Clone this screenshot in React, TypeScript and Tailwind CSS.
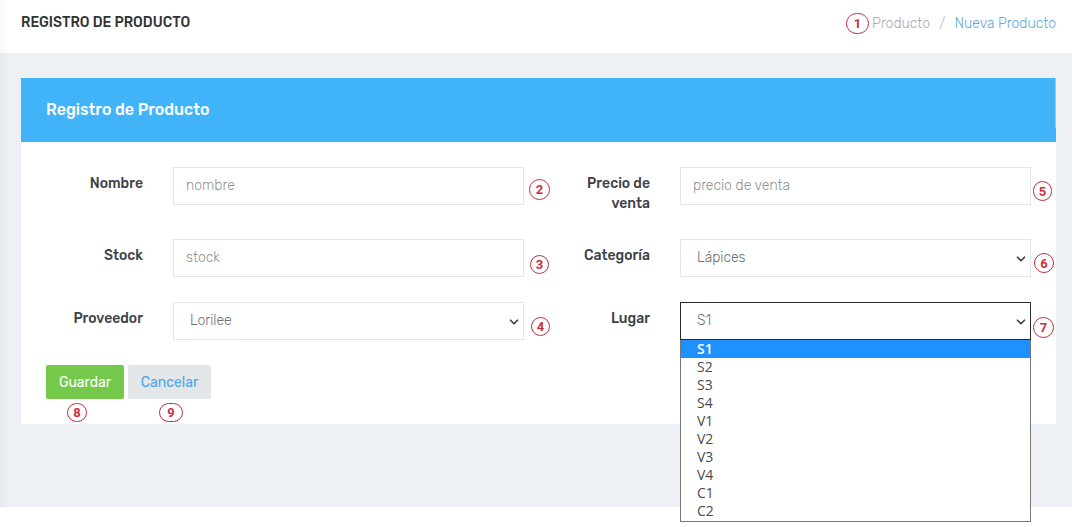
import { ChevronDown } from "lucide-react"

const options = ["S1", "S2", "S3", "S4", "V1", "V2", "V3", "V4", "C1", "C2"]

function Badge({ n, className }: { n: number; className: string }) {
  return (
    <span
      className={
        "flex shrink-0 items-center justify-center rounded-full border border-[#b8323f] bg-white font-['Roboto',sans-serif] text-[13px] leading-none font-bold text-[#c9303f] " +
        className
      }
    >
      {n}
    </span>
  )
}

function Label({ children }: { children: React.ReactNode }) {
  return (
    <label className="mt-[7px] mr-[30px] w-[97px] text-right text-[14px] leading-[20px] font-medium text-[#3d4247]">
      {children}
    </label>
  )
}

const inputCls =
  "h-[38px] w-[351px] shrink-0 border border-[#e4e7ea] bg-white px-3 pb-[1px] text-[14px] font-light text-[#6b7075] outline-none placeholder:text-[#8f9397]"

function Select({ value, items, active }: { value: string; items: string[]; active?: boolean }) {
  return (
    <div className="relative shrink-0">
      <select
        className={
          "block h-[38px] w-[351px] appearance-none border bg-white pr-3 pb-[2px] pl-[16px] text-[14px] font-light text-[#6b7075] outline-none " +
          (active ? "border-[#2b2b2b]" : "border-[#e4e7ea]")
        }
        defaultValue={value}
      >
        {items.map((o) => (
          <option key={o}>{o}</option>
        ))}
      </select>
      <ChevronDown
        className="pointer-events-none absolute top-[13px] right-[3px] h-[14px] w-[14px] text-[#3d4247]"
        strokeWidth={3}
      />
    </div>
  )
}

export default function App() {
  return (
    <div className="relative h-[527px] w-[1072px] overflow-hidden bg-white font-['Rubik','Inter','Roboto',sans-serif]">
      <div className="pointer-events-none absolute top-0 left-0 z-10 h-[507px] w-[10px] bg-gradient-to-r from-[#00000008] to-transparent" />

      {/* Top bar */}
      <div className="flex h-[53px] items-center justify-between pr-[16px] pl-[21px]">
        <h1 className="-mt-[8px] text-[14px] font-medium text-[#333]">REGISTRO DE PRODUCTO</h1>
        <div className="-mt-[7px] flex items-center text-[14px] font-light">
          <Badge n={1} className="mr-[3px] h-[21px] w-[23px]" />
          <span className="text-[#a6abb0]">Producto</span>
          <span className="mx-[9px] text-[#b4b8bc]">/</span>
          <span className="text-[#5fa8dc]">Nueva Producto</span>
        </div>
      </div>

      {/* Content */}
      <div className="h-[454px] bg-[#edf1f5] pt-[25px] pr-[16px] pl-[21px]">
        <div className="h-[346px] bg-white">
          <div className="relative flex h-[64px] items-center bg-[#41b3f9] px-[25px]">
            <h2 className="text-[16px] font-medium text-white">Registro de Producto</h2>
            <span className="absolute top-0 right-0 h-[50px] w-[1px] bg-[#8fd0f9]" />
          </div>

          <div className="relative pt-[25px] pl-[25px]">
            <div className="grid grid-cols-[507px_1fr]">
              {/* row 1 */}
              <div className="flex h-[72px] items-start">
                <Label>Nombre</Label>
                <input className={inputCls} placeholder="nombre" />
                <Badge n={2} className="mt-[12px] ml-[5px] h-[21px] w-[21px]" />
              </div>
              <div className="flex h-[72px] items-start">
                <Label>Precio de venta</Label>
                <input className={inputCls} placeholder="precio de venta" />
                <Badge n={5} className="mt-[14px] ml-[2px] h-[20px] w-[19px]" />
              </div>

              {/* row 2 */}
              <div className="flex h-[63px] items-start">
                <Label>Stock</Label>
                <input className={inputCls} placeholder="stock" />
                <Badge n={3} className="mt-[16px] ml-[6px] h-[19px] w-[19px]" />
              </div>
              <div className="flex h-[63px] items-start">
                <Label>Categoría</Label>
                <Select value="Lápices" items={["Lápices"]} />
                <Badge n={6} className="mt-[14px] ml-[3px] h-[20px] w-[20px]" />
              </div>

              {/* row 3 */}
              <div className="flex h-[63px] items-start">
                <Label>Proveedor</Label>
                <Select value="Lorilee" items={["Lorilee"]} />
                <Badge n={4} className="mt-[15px] ml-[7px] h-[19px] w-[19px]" />
              </div>
              <div className="flex h-[63px] items-start">
                <Label>Lugar</Label>
                <div className="relative shrink-0">
                  <Select value="S1" items={options} active />
                  {/* open list */}
                  <ul className="absolute top-[38px] left-0 z-20 h-[182px] w-[351px] border border-t-0 border-[#767676] bg-white font-['Open_Sans',sans-serif] text-[14px] leading-[18px] text-[#4a4a4a]">
                    {options.map((o, i) => (
                      <li
                        key={o}
                        className={i === 0 ? "bg-[#1e90ff] pl-[16px] font-semibold text-white" : "pl-[16px]"}
                      >
                        {o}
                      </li>
                    ))}
                  </ul>
                </div>
                <Badge n={7} className="mt-[15px] ml-[2px] h-[21px] w-[21px]" />
              </div>
            </div>

            {/* buttons */}
            <div className="flex gap-[4px]">
              <div className="flex flex-col items-center">
                <button className="h-[34px] w-[78px] rounded-[2px] bg-[#75c94a] text-[14px] text-white">Guardar</button>
                <Badge n={8} className="mt-[4px] -ml-[16px] h-[19px] w-[20px]" />
              </div>
              <div className="flex flex-col items-center">
                <button className="h-[34px] w-[83px] rounded-[2px] bg-[#e4e7ea] text-[14px] text-[#4aa5e8]">Cancelar</button>
                <Badge n={9} className="mt-[4px] ml-[3px] h-[19px] w-[24px]" />
              </div>
            </div>
          </div>
        </div>
      </div>
    </div>
  )
}
